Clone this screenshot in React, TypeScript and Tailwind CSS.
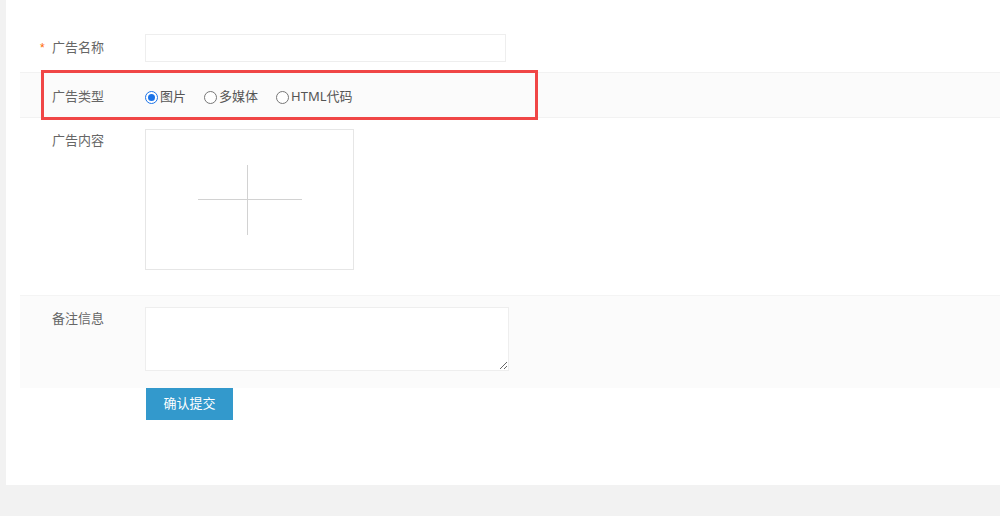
import React from "react";

const font = { fontFamily: '"Liberation Sans", "Noto Sans CJK SC", sans-serif' };

function Label({ text, star }: { text: string; star?: boolean }) {
  return (
    <div className="w-[125px] shrink-0 pl-[20px] flex items-center text-[13px] text-[#666] leading-[24px]">
      <span className="w-[12px] text-[#ff6600] text-[12px]">{star ? "*" : ""}</span>
      <span>{text}</span>
    </div>
  );
}

function Radio({ checked, label, first }: { checked?: boolean; label: string; first?: boolean }) {
  return (
    <label className={`flex items-center ${first ? "" : "ml-[18px]"}`}>
      {checked ? (
        <span className="w-[13px] h-[13px] rounded-full border-[1.5px] border-[#1a73e8] flex items-center justify-center bg-white">
          <span className="w-[7px] h-[7px] rounded-full bg-[#1a73e8]" />
        </span>
      ) : (
        <span className="w-[13px] h-[13px] rounded-full border border-[#777] bg-white" />
      )}
      <span className="ml-[2px] text-[13px] text-[#555]" style={{ fontFamily: '"Noto Sans", "Noto Sans CJK SC", sans-serif' }}>{label}</span>
    </label>
  );
}

export default function App() {
  return (
    <div className="w-[1000px] h-[516px] bg-[#f2f2f2] pl-[6px] overflow-hidden" style={font}>
      <div className="bg-white h-[485px] pl-[14px]">
        {/* Row 1 */}
        <div className="flex items-center pt-[34px] pb-[10px]">
          <Label text="广告名称" star />
          <input className="w-[361px] h-[28px] border border-[#eee] outline-none bg-white" />
        </div>
        {/* Row 2 */}
        <div className="relative flex items-center h-[46px] pt-[4px] bg-[#fbfbfb] border-y border-[#f2f2f2]">
          <Label text="广告类型" />
          <div className="flex items-center">
            <Radio checked label="图片" first />
            <Radio label="多媒体" />
            <Radio label="HTML代码" />
          </div>
          <div className="absolute left-[21px] top-[-3px] w-[497px] h-[50px] border-[3px] border-[#f04646] pointer-events-none" />
        </div>
        {/* Row 3 */}
        <div className="flex items-start pt-[11px] pb-[25px]">
          <Label text="广告内容" />
          <div className="w-[209px] h-[141px] border border-[#e6e6e6] bg-white">
            <svg width="207" height="139" viewBox="0 0 207 139">
              <line x1="52" y1="69.5" x2="156" y2="69.5" stroke="#d2d2d2" strokeWidth="1" />
              <line x1="101.5" y1="35" x2="101.5" y2="105" stroke="#d2d2d2" strokeWidth="1" />
            </svg>
          </div>
        </div>
        {/* Row 4 */}
        <div className="flex items-start pt-[11px] pb-[17px] bg-[#fbfbfb] border-t border-[#f4f4f4]">
          <Label text="备注信息" />
          <textarea className="block w-[364px] h-[64px] border border-[#eee] bg-white outline-none" />
        </div>
        {/* Button */}
        <div className="pl-[126px]">
          <button className="w-[87px] h-[32px] bg-[#3399cc] text-white text-[13px]">确认提交</button>
        </div>
      </div>
    </div>
  );
}
